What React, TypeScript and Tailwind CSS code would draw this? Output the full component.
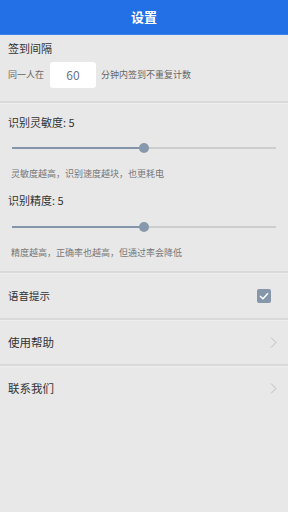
import React from "react";

const font = { fontFamily: '"Noto Sans CJK SC", "Noto Sans", sans-serif' };

function Slider({ value }: { value: number }) {
  // value 0..10, thumb placed by percentage
  const pct = (value / 10) * 100;
  return (
    <div className="relative h-5 mx-3 flex items-center">
      <div className="h-[2px] w-full bg-[#cdcdcd]" />
      <div className="absolute left-0 h-[2px] bg-[#8596ab]" style={{ width: `${pct}%` }} />
      <div
        className="absolute w-[10px] h-[10px] rounded-full bg-[#8798ac] -translate-x-1/2"
        style={{ left: `${pct}%` }}
      />
    </div>
  );
}

function Divider() {
  return (
    <div>
      <div className="h-[2px] bg-[#d9d9d9]" />
      <div className="h-px bg-[#eeeeee]" />
    </div>
  );
}

function Chevron() {
  return (
    <svg width="7" height="11" viewBox="0 0 7 11" className="mr-[3px]">
      <path d="M1 0.5 L6 5.5 L1 10.5" fill="none" stroke="#bcbcbc" strokeWidth="1" />
    </svg>
  );
}

export default function App() {
  return (
    <div className="w-[288px] h-[512px] bg-[#e8e8e8] text-[#333]" style={font}>
      {/* Header */}
      <div className="h-[35px] bg-[#236fe6] border-b border-[#3b82ee] flex items-center justify-center">
        <span className="text-white text-[13px] font-bold">设置</span>
      </div>

      {/* Interval */}
      <div className="pt-[5px] pb-[13px] px-2">
        <div className="text-[11px] leading-4">签到间隔</div>
        <div className="mt-[6px] flex items-center">
          <span className="text-[9px] text-[#666]">同一人在</span>
          <div className="ml-[6px] w-[46px] h-[26px] bg-white rounded-[3px] flex items-center justify-center text-[12px] text-[#6a7385]">
            60
          </div>
          <span className="ml-[5px] text-[9px] text-[#666]">分钟内签到不重复计数</span>
        </div>
      </div>
      <Divider />

      {/* Recognition */}
      <div className="pt-[10px] pb-[11px]">
        <div className="px-2 text-[11px] leading-4">识别灵敏度: 5</div>
        <div className="mt-2">
          <Slider value={5} />
        </div>
        <div className="mt-[9px] px-[11px] text-[9px] leading-[14px] text-[#777]">
          灵敏度越高，识别速度越块，也更耗电
        </div>
        <div className="mt-[11px] px-2 text-[11px] leading-4">识别精度: 5</div>
        <div className="mt-[9px]">
          <Slider value={5} />
        </div>
        <div className="mt-[9px] px-[11px] text-[9px] leading-[14px] text-[#777]">
          精度越高，正确率也越高，但通过率会降低
        </div>
      </div>
      <Divider />

      {/* Voice */}
      <div className="h-[44px] px-2 flex items-center justify-between">
        <span className="text-[10.5px]">语音提示</span>
        <div className="w-[14px] h-[14px] mr-[9px] rounded-[2px] bg-[#8797aa] flex items-center justify-center">
          <svg width="10" height="8" viewBox="0 0 10 8">
            <path d="M1 4 L4 6.8 L9 1.2" fill="none" stroke="white" strokeWidth="1.4" />
          </svg>
        </div>
      </div>
      <Divider />

      <div className="h-[43px] px-2 flex items-center justify-between">
        <span className="text-[11.5px]">使用帮助</span>
        <Chevron />
      </div>
      <Divider />

      <div className="h-[43px] px-2 flex items-center justify-between">
        <span className="text-[11.5px]">联系我们</span>
        <Chevron />
      </div>
    </div>
  );
}
